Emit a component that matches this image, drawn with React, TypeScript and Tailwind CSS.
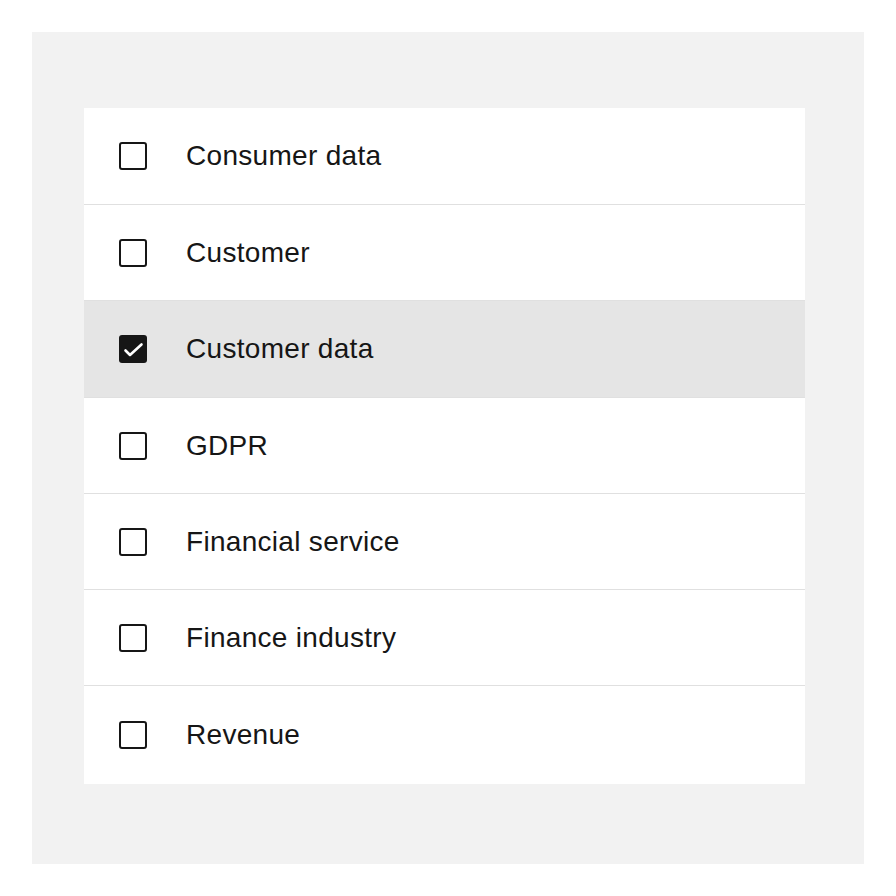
import React from 'react';

const items = [
    { label: 'Consumer data', checked: false, h: 'h-[96px]' },
    { label: 'Customer', checked: false, h: 'h-[96px]' },
    { label: 'Customer data', checked: true, h: 'h-[97px]' },
    { label: 'GDPR', checked: false, h: 'h-[96px]' },
    { label: 'Financial service', checked: false, h: 'h-[96px]' },
    { label: 'Finance industry', checked: false, h: 'h-[96px]' },
    { label: 'Revenue', checked: false, h: 'h-[99px]' },
];

function Checkbox({ checked }: { checked: boolean }) {
    if (checked) {
        return (
            <span className="block h-[28px] w-[28px] rounded-[3px] bg-[#161616]">
                <svg width="28" height="28" viewBox="0 0 28 28" fill="none">
                    <path d="M6.5 15.5l4.5 4.5 11.5-10.5" stroke="#fff" strokeWidth="2.6" strokeLinecap="round" strokeLinejoin="round" />
                </svg>
            </span>
        );
    }
    return <span className="block h-[28px] w-[28px] rounded-[3px] border-2 border-[#161616] bg-white" />;
}

export default function App() {
    return (
        <div className="min-h-[896px] bg-white p-[32px]" style={{ fontFamily: '"Liberation Sans", Arial, sans-serif' }}>
            <div className="h-[832px] w-[832px] bg-[#f2f2f2] pl-[52px] pt-[76px]">
                <div className="flex h-[676px] w-[721px] flex-col bg-white">
                    {items.map((item, i) => (
                        <div
                            key={item.label}
                            className={`flex shrink-0 items-center ${item.h} ${i > 0 ? 'border-t border-[#e0e0e0]' : ''} ${item.checked ? 'bg-[#e5e5e5]' : ''}`}
                        >
                            <div className="ml-[35px]">
                                <Checkbox checked={item.checked} />
                            </div>
                            <span className="ml-[39px] text-[28px] tracking-[0.3px] text-[#161616]">{item.label}</span>
                        </div>
                    ))}
                </div>
            </div>
        </div>
    );
}
